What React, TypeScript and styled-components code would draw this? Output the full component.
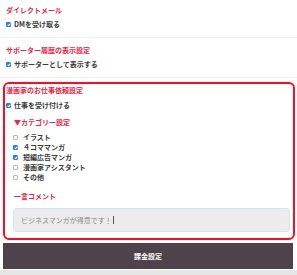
import styled, { createGlobalStyle } from "styled-components";

const Global = createGlobalStyle`
  html, body { margin: 0; padding: 0; background: #fff; }
  body {
    font-family: "Noto Sans CJK JP", "Noto Sans", sans-serif;
    font-size: 7px;
    color: #333;
  }
`;

const Page = styled.div`
  width: 297px;
  padding-top: 5px;
`;

const Block = styled.section`
  padding: 0 3px;
`;

const Heading = styled.div<{ $indent?: number }>`
  height: 10px;
  line-height: 10px;
  padding-left: ${(p) => p.$indent ?? 3}px;
  font-weight: 700;
  font-size: 7px;
  color: #ec2446;
  white-space: nowrap;
`;

const Row = styled.label<{ $indent?: number; $gap?: number; $mt?: number }>`
  display: flex;
  align-items: center;
  height: 10px;
  margin-top: ${(p) => p.$mt ?? 0}px;
  padding-left: ${(p) => p.$indent ?? 3}px;
  gap: ${(p) => p.$gap ?? 3}px;
  font-weight: 700;
  color: #3a3a3a;
  white-space: nowrap;
`;

const Box = styled.span<{ $on?: boolean }>`
  position: relative;
  width: 5px;
  height: 5px;
  box-sizing: border-box;
  border-radius: 1px;
  flex-shrink: 0;
  background: ${(p) => (p.$on ? "#1f7de8" : "#fff")};
  border: 1px solid ${(p) => (p.$on ? "#1f7de8" : "#b9b9b9")};

  ${(p) =>
    p.$on &&
    `&::after {
      content: "";
      position: absolute;
      left: 1px;
      top: 0px;
      width: 1px;
      height: 2px;
      border: solid #fff;
      border-width: 0 1px 1px 0;
      transform: rotate(40deg);
    }`}
`;

const Divider = styled.hr<{ $mb: number }>`
  border: 0;
  height: 1px;
  margin: 8px 0 ${(p) => p.$mb}px;
  background: #efefef;
`;

const RedPanel = styled.div`
  margin: 0 2px 0 3px;
  border: 2px solid #ff0a1f;
  border-radius: 6px;
  padding: 1px 3px 6px 1px;
`;

const CategoryList = styled.div`
  margin-top: 5px;
`;

const Comment = styled.div`
  margin: 7px 0 0 7px;
  height: 24px;
  box-sizing: border-box;
  border: 1px solid #d6e5f3;
  border-radius: 3px;
  background: #ececec;
  display: flex;
  align-items: center;
  padding-left: 7px;
  color: #8a8a8a;
`;

const Caret = styled.span`
  display: inline-block;
  width: 1px;
  height: 8px;
  margin-left: 1px;
  background: #555;
`;

const Submit = styled.button`
  display: block;
  margin: 3px 0 0 3px;
  width: 290px;
  height: 26px;
  border: 0;
  padding: 0;
  background: #4e434b;
  color: #fff;
  font-family: inherit;
  font-size: 7px;
  font-weight: 700;
`;

const Footer = styled.div`
  margin-top: 1px;
  height: 6px;
  background: #e6e6e6;
`;

const categories = [
  { label: "イラスト", on: false },
  { label: "４コママンガ", on: true },
  { label: "短編広告マンガ", on: true },
  { label: "漫画家アシスタント", on: false },
  { label: "その他", on: false },
];

export default function App() {
  return (
    <Page>
      <Global />
      <Block>
        <Heading>ダイレクトメール</Heading>
        <Row $mt={4}>
          <Box $on />
          DMを受け取る
        </Row>
      </Block>
      <Divider $mb={7} />
      <Block>
        <Heading>サポーター履歴の表示設定</Heading>
        <Row $mt={4}>
          <Box $on />
          サポーターとして表示する
        </Row>
      </Block>
      <Divider $mb={4} />

      <RedPanel>
        <Heading $indent={0}>漫画家のお仕事依頼設定</Heading>
        <Row $indent={0} $mt={5}>
          <Box $on />
          仕事を受け付ける
        </Row>
        <Heading $indent={8} style={{ marginTop: 7 }}>
          ▼カテゴリー設定
        </Heading>
        <CategoryList>
          {categories.map((c) => (
            <Row key={c.label} $indent={7} $gap={5}>
              <Box $on={c.on} />
              {c.label}
            </Row>
          ))}
        </CategoryList>
        <Heading $indent={8} style={{ marginTop: 9 }}>
          一言コメント
        </Heading>
        <Comment>
          ビジネスマンガが得意です！
          <Caret />
        </Comment>
      </RedPanel>

      <Submit>課金設定</Submit>
      <Footer />
    </Page>
  );
}
